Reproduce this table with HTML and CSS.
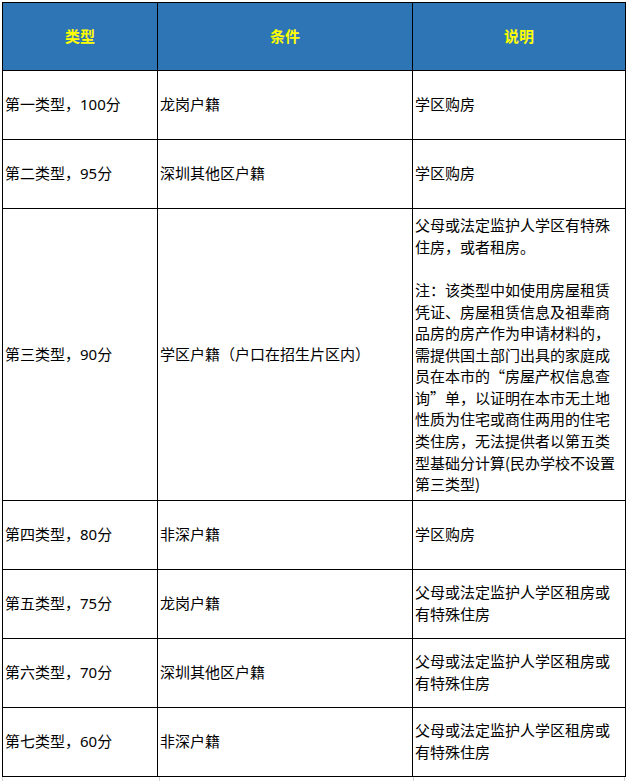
FILE: index.html
```html
<!DOCTYPE html>
<html lang="zh-CN">
<head>
<meta charset="utf-8">
<title>类型 条件 说明</title>
<link rel="stylesheet" href="styles.css">
</head>
<body>
<table class="tbl">
  <colgroup>
    <col class="c1">
    <col class="c2">
    <col class="c3">
  </colgroup>
  <thead>
    <tr class="head">
      <th>类型</th>
      <th>条件</th>
      <th>说明</th>
    </tr>
  </thead>
  <tbody>
    <tr class="row">
      <td>第一类型，100分</td>
      <td>龙岗户籍</td>
      <td>学区购房</td>
    </tr>
    <tr class="row">
      <td>第二类型，95分</td>
      <td>深圳其他区户籍</td>
      <td>学区购房</td>
    </tr>
    <tr class="row tall">
      <td>第三类型，90分</td>
      <td>学区户籍（户口在招生片区内）</td>
      <td class="desc cjk">父母或法定监护人学区有特殊住房，或者租房。<br><br>注：该类型中如使用房屋租赁凭证、房屋租赁信息及祖辈商品房的房产作为申请材料的，需提供国土部门出具的家庭成员在本市的“房屋产权信息查询”单，以证明在本市无土地性质为住宅或商住两用的住宅类住房，无法提供者以第五类型基础分计算(民办学校不设置第三类型)</td>
    </tr>
    <tr class="row">
      <td>第四类型，80分</td>
      <td>非深户籍</td>
      <td>学区购房</td>
    </tr>
    <tr class="row">
      <td>第五类型，75分</td>
      <td>龙岗户籍</td>
      <td class="desc">父母或法定监护人学区租房或有特殊住房</td>
    </tr>
    <tr class="row">
      <td>第六类型，70分</td>
      <td>深圳其他区户籍</td>
      <td class="desc">父母或法定监护人学区租房或有特殊住房</td>
    </tr>
    <tr class="row">
      <td>第七类型，60分</td>
      <td>非深户籍</td>
      <td class="desc">父母或法定监护人学区租房或有特殊住房</td>
    </tr>
  </tbody>
</table>
<div class="grid-tail">
  <span class="g g1"></span>
  <span class="g g2"></span>
  <span class="g g3"></span>
</div>
</body>
</html>
```
FILE: styles.css
```css
html, body {
  margin: 0;
  padding: 0;
  background: #ffffff;
}

body {
  padding: 2px 0 0 2px;
  font-family: "Noto Sans", "Noto Sans CJK SC", sans-serif;
  font-size: 15px;
  color: #000000;
}

.tbl {
  border-collapse: collapse;
  table-layout: fixed;
  width: 623px;
  border: 1px solid #000;
}

.c1 { width: 155px; }
.c2 { width: 255px; }
.c3 { width: 213px; }

.tbl th,
.tbl td {
  border: 1px solid #000;
  vertical-align: middle;
  text-align: left;
  padding: 0 2px;
  line-height: 21.6px;
  font-weight: normal;
  letter-spacing: 0;
}

.head th {
  height: 67px;
  background: #2e75b6;
  color: #ffff00;
  font-weight: bold;
  text-align: center;
}

.row td {
  height: 68px;
}

.row.tall td {
  height: 291px;
}

.desc {
  padding-right: 4px;
}

.tbl td.cjk {
  font-family: "Noto Sans CJK SC", sans-serif;
}

.grid-tail {
  display: flex;
  height: 4px;
  width: 625px;
  margin-left: -2px;
}

.g {
  display: block;
  height: 4px;
  border-left: 1px solid #d4d4d4;
}

.g1 { width: 156px; margin-left: 2px; }
.g2 { width: 254px; }
.g3 { width: 211px; border-right: 1px solid #d4d4d4; }
```
